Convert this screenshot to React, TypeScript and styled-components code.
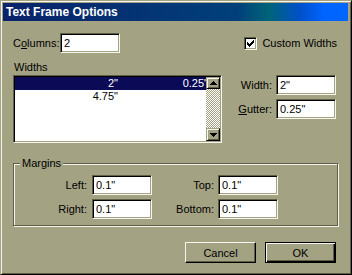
import React from "react";
import styled, { createGlobalStyle } from "styled-components";

// ______________________________________________________
// colours

const FACE = "#a3a283";
const LIGHT = "#f6f6ee";
const SHADOW = "#5f5f48";
const DARK = "#000000";
const SELECT = "#0a0a56";

const GlobalStyle = createGlobalStyle`
  html, body {
    margin: 0;
    padding: 0;
    background: ${FACE};
  }
  body {
    font-family: "Liberation Sans", Arial, sans-serif;
    font-size: 11px;
    color: #000;
  }
  * {
    box-sizing: border-box;
  }
`;

// ______________________________________________________
// frame

const Window = styled.div`
  width: 352px;
  height: 275px;
  padding: 2px;
  background: ${FACE};
  border: 1px solid;
  border-color: ${FACE} ${DARK} ${DARK} ${FACE};
  box-shadow: inset 1px 1px 0 ${LIGHT}, inset -1px -1px 0 ${SHADOW};
  display: flex;
  flex-direction: column;
`;

const TitleBar = styled.div`
  height: 18px;
  margin-right: 1px;
  padding-left: 3px;
  line-height: 18px;
  font-size: 12px;
  font-weight: bold;
  color: #fff;
  background: linear-gradient(
    to right,
    #0a226a 0%,
    #00407a 68%,
    #006478 77%,
    #0050c8 86%,
    #0064ff 93%,
    #0066ff 100%
  );
`;

const Body = styled.div`
  display: flex;
  flex-direction: column;
  padding: 12px 13px 0 10px;
`;

const TopRow = styled.div`
  display: flex;
  align-items: center;
  justify-content: space-between;
  height: 20px;
`;

const Label = styled.span<{ $width?: number; $align?: "left" | "right"; $gap?: number }>`
  display: inline-block;
  width: ${(p) => (p.$width ? `${p.$width}px` : "auto")};
  text-align: ${(p) => p.$align || "left"};
  padding-right: ${(p) => p.$gap || 0}px;
  line-height: 13px;
  white-space: nowrap;
`;

const Key = styled.u`
  text-decoration: underline;
  text-underline-offset: 1px;
`;

const Field = styled.div`
  display: flex;
  align-items: center;
`;

const TextBox = styled.div<{ $width?: number }>`
  width: ${(p) => p.$width || 60}px;
  height: 20px;
  padding: 1px 2px;
  background: #fff;
  border: 1px solid;
  border-color: ${SHADOW} ${LIGHT} ${LIGHT} ${SHADOW};
  box-shadow: inset 1px 1px 0 ${DARK}, inset -1px -1px 0 ${FACE};
  line-height: 16px;
  padding-left: 3px;
  white-space: nowrap;
`;

const CheckWrap = styled.label`
  display: flex;
  align-items: center;
  gap: 5px;
  margin-right: -1px;
`;

const CheckBox = styled.span`
  width: 13px;
  height: 13px;
  background: #fff;
  border: 1px solid;
  border-color: ${SHADOW} ${LIGHT} ${LIGHT} ${SHADOW};
  box-shadow: inset 1px 1px 0 ${DARK}, inset -1px -1px 0 ${FACE};
  display: flex;
  align-items: center;
  justify-content: center;
`;

// ______________________________________________________
// list of widths

const SectionLabel = styled.div`
  margin-top: 8px;
  line-height: 13px;
  padding-left: 1px;
`;

const Middle = styled.div`
  display: flex;
  justify-content: space-between;
  align-items: flex-start;
  margin-top: 1px;
`;

const ListBox = styled.div`
  width: 209px;
  height: 68px;
  padding: 1px;
  border: 1px solid;
  border-color: ${SHADOW} ${LIGHT} ${LIGHT} ${SHADOW};
  box-shadow: inset 1px 1px 0 ${DARK}, inset -1px -1px 0 ${FACE};
  display: flex;
`;

const Rows = styled.div`
  flex: 1;
  background: #fff;
  overflow: hidden;
`;

const Row = styled.div<{ $selected?: boolean }>`
  display: flex;
  height: 13px;
  line-height: 13px;
  background: ${(p) => (p.$selected ? SELECT : "transparent")};
  color: ${(p) => (p.$selected ? "#fff" : "#000")};
`;

const Cell = styled.span<{ $width: number }>`
  flex: 0 0 ${(p) => p.$width}px;
  text-align: right;
  padding-right: 1px;
  white-space: nowrap;
`;

const ScrollBar = styled.div`
  width: 14px;
  display: flex;
  flex-direction: column;
`;

const ScrollButton = styled.div<{ $h: number }>`
  height: ${(p) => p.$h}px;
  background: ${FACE};
  border: 1px solid;
  border-color: ${FACE} ${DARK} ${DARK} ${FACE};
  box-shadow: inset 1px 1px 0 ${LIGHT}, inset -1px -1px 0 ${SHADOW};
  display: flex;
  align-items: center;
  justify-content: center;
`;

const Track = styled.div`
  flex: 1;
  background: repeating-conic-gradient(#fff 0 25%, ${FACE} 0 50%) 0 0 / 2px 2px;
`;

const FieldColumn = styled.div`
  display: flex;
  flex-direction: column;
  align-items: flex-end;
  gap: 4px;
`;

// ______________________________________________________
// margins group

const Group = styled.div`
  position: relative;
  margin-top: 20px;
  margin-right: -2px;
  padding: 11px 0 6px 0;
  border: 1px solid ${SHADOW};
  box-shadow: inset 1px 1px 0 ${LIGHT}, 1px 1px 0 ${LIGHT};
  display: grid;
  grid-template-columns: 78px 60px 66px 60px;
  row-gap: 4px;
  align-items: center;
`;

const Legend = styled.span`
  position: absolute;
  top: -7px;
  left: 6px;
  padding: 0 2px;
  line-height: 13px;
  background: ${FACE};
`;

// ______________________________________________________
// buttons

const ButtonRow = styled.div`
  display: flex;
  justify-content: flex-end;
  gap: 9px;
  margin-top: 16px;
`;

const Button = styled.div<{ $default?: boolean }>`
  width: 71px;
  height: 21px;
  display: flex;
  align-items: center;
  justify-content: center;
  background: ${FACE};
  border: 1px solid;
  border-color: ${(p) => (p.$default ? `${DARK}` : `${LIGHT} ${DARK} ${DARK} ${LIGHT}`)};
  box-shadow: ${(p) =>
    p.$default
      ? `inset 1px 1px 0 ${LIGHT}, inset -1px -1px 0 ${DARK}, inset -2px -2px 0 ${SHADOW}`
      : `inset -1px -1px 0 ${SHADOW}`};
`;

// ______________________________________________________
// icons

const Check = () => (
  <svg width="7" height="7" viewBox="0 0 7 7" shapeRendering="crispEdges">
    <path d="M0 2h1v1h1v1h1v-1h1v-1h1v-1h1v-1h1v3h-1v1h-1v1h-1v1h-1v1h-1v-1h-1v-1h-1z" fill="#000" />
  </svg>
);

const Arrow = ({ down }: { down?: boolean }) => (
  <svg width="7" height="4" viewBox="0 0 7 4" shapeRendering="crispEdges">
    <path d={down ? "M0 0h7L3.5 4z" : "M3.5 0L7 4H0z"} fill="#000" />
  </svg>
);

// ______________________________________________________
// component

const App = () => (
  <>
    <GlobalStyle />
    <Window>
      <TitleBar>Text Frame Options</TitleBar>
      <Body>
        <TopRow>
          <Field>
            <Label $width={47}>
              C<Key>o</Key>lumns:
            </Label>
            <TextBox>2</TextBox>
          </Field>
          <CheckWrap>
            <CheckBox>
              <Check />
            </CheckBox>
            <span>Custom Widths</span>
          </CheckWrap>
        </TopRow>

        <SectionLabel>Widths</SectionLabel>
        <Middle>
          <ListBox>
            <Rows>
              <Row $selected>
                <Cell $width={104}>2"</Cell>
                <Cell $width={90}>0.25"</Cell>
              </Row>
              <Row>
                <Cell $width={104}>4.75"</Cell>
              </Row>
            </Rows>
            <ScrollBar>
              <ScrollButton $h={12}>
                <Arrow />
              </ScrollButton>
              <Track />
              <ScrollButton $h={13}>
                <Arrow down />
              </ScrollButton>
            </ScrollBar>
          </ListBox>
          <FieldColumn>
            <Field>
              <Label $gap={4}>Width:</Label>
              <TextBox>2"</TextBox>
            </Field>
            <Field>
              <Label $gap={4}>
                <Key>G</Key>utter:
              </Label>
              <TextBox>0.25"</TextBox>
            </Field>
          </FieldColumn>
        </Middle>

        <Group>
          <Legend>Margins</Legend>
          <Label $align="right" $gap={5}>Left:</Label>
          <TextBox>0.1"</TextBox>
          <Label $align="right" $gap={4}>Top:</Label>
          <TextBox>0.1"</TextBox>
          <Label $align="right" $gap={5}>Right:</Label>
          <TextBox>0.1"</TextBox>
          <Label $align="right" $gap={4}>Bottom:</Label>
          <TextBox>0.1"</TextBox>
        </Group>

        <ButtonRow>
          <Button>Cancel</Button>
          <Button $default>OK</Button>
        </ButtonRow>
      </Body>
    </Window>
  </>
);

export default App;
